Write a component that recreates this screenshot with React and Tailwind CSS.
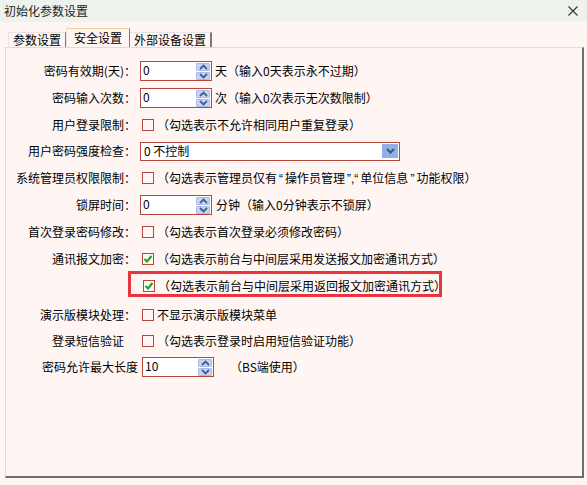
import React from 'react';

const FONT = { fontFamily: '"Noto Sans CJK SC", "Noto Sans", sans-serif' };

function Chevron({ up }) {
  return (
    <svg width="9" height="6" viewBox="0 0 9 6">
      <path d={up ? 'M1 5 L4.5 1.5 L8 5' : 'M1 1 L4.5 4.5 L8 1'} fill="none" stroke="#3f5f93" strokeWidth="1.8" />
    </svg>
  );
}

function Spinner({ value, w = 'w-[72px]' }) {
  return (
    <div className={`flex h-[20px] ${w} border border-[#b8473b] bg-white`}>
      <div className="flex-1 pl-[2px] text-[12px] leading-[16px]">{value}</div>
      <div className="flex w-[16px] flex-col gap-[1px] p-[1px]">
        <div className="flex flex-1 items-center justify-center rounded-[1px] border border-[#a9bbe6] bg-[#c6d4f5]"><Chevron up /></div>
        <div className="flex flex-1 items-center justify-center rounded-[1px] border border-[#a9bbe6] bg-[#c6d4f5]"><Chevron /></div>
      </div>
    </div>
  );
}

function Check({ checked }) {
  return (
    <div className="ml-[2px] flex h-[12px] w-[12px] shrink-0 items-center justify-center border border-[#b8473b]">
      {checked && (
        <svg width="10" height="10" viewBox="0 0 10 10">
          <path d="M1.5 5 L4 7.5 L8.5 2" fill="none" stroke="#20a020" strokeWidth="2" />
        </svg>
      )}
    </div>
  );
}

function Row({ h, label, colon = true, children }) {
  return (
    <div className={`flex items-center ${h}`}>
      <div className="w-[130px] shrink-0 text-right text-[12px] leading-none">
        {label}{colon ? '：' : <span className="inline-block w-[12px]" />}
      </div>
      <div className="ml-[4px] flex items-center">{children}</div>
    </div>
  );
}

const Note = ({ children, ml = 'ml-[3px]' }) => <span className={`${ml} whitespace-nowrap text-[12px] leading-none`}>{children}</span>;

// narrow quote marks, as in the original bitmap font
const Q = ({ children }) => <span className="px-[2px] font-['Liberation_Sans']">{children}</span>;

export default function App() {
  return (
    <div className="h-[485px] w-[587px] overflow-hidden bg-[#fff6f4] text-black" style={FONT}>
      {/* title bar */}
      <div className="flex h-[22px] items-center justify-between bg-[#eef2ec] pl-[4px] pr-[9px]">
        <span className="text-[12px] leading-none text-[#222]">初始化参数设置</span>
        <svg width="10" height="10" viewBox="0 0 10 10">
          <path d="M0.5 0.5 L9.5 9.5 M9.5 0.5 L0.5 9.5" stroke="#333" strokeWidth="1.1" />
        </svg>
      </div>

      {/* tabs */}
      <div className="mt-[6px] flex h-[19px] items-end pl-[8px]">
        <div className="flex h-[15px] w-[58px] items-center justify-center border-l border-t border-r border-l-[#e4e4e4] border-t-[#e4e4e4] border-r-[#7a7a7a] text-[12px] leading-none">参数设置</div>
        <div className="flex h-[19px] w-[64px] items-center justify-center border-l border-t border-r border-l-[#e4e4e4] border-t-[#f0cf98] border-r-[#7a7a7a] text-[12px] leading-none">安全设置</div>
        <div className="flex h-[15px] w-[82px] items-center justify-center border-t border-r-2 border-t-[#e4e4e4] border-r-[#7a7a7a] text-[12px] leading-none">外部设备设置</div>
      </div>

      {/* panel */}
      <div className="ml-[5px] h-[431px] w-[579px] border-l border-t border-r-2 border-b-2 border-l-[#dcdcdc] border-t-[#dcdcdc] border-r-[#6e6e6e] border-b-[#6e6e6e] pt-[10px]">
        <Row h="h-[26px]" label="密码有效期(天)">
          <Spinner value="0" />
          <Note>天（输入0天表示永不过期）</Note>
        </Row>
        <Row h="h-[27px]" label="密码输入次数">
          <Spinner value="0" />
          <Note>次（输入0次表示无次数限制）</Note>
        </Row>
        <Row h="h-[27px]" label="用户登录限制">
          <Check />
          <Note>（勾选表示不允许相同用户重复登录）</Note>
        </Row>
        <Row h="h-[26px]" label="用户密码强度检查">
          <div className="flex h-[19px] w-[260px] items-center justify-between border border-[#b8473b] bg-white">
            <span className="pl-[3px] text-[12px] leading-none">0 不控制</span>
            <div className="mr-[1px] flex h-[14px] w-[16px] items-center justify-center bg-[#8fb0e6]">
              <svg width="9" height="6" viewBox="0 0 9 6">
                <path d="M1 1 L4.5 4.5 L8 1" fill="none" stroke="#3a5585" strokeWidth="2" />
              </svg>
            </div>
          </div>
        </Row>
        <Row h="h-[28px]" label="系统管理员权限限制">
          <Check />
          <Note>（勾选表示管理员仅有<Q>“</Q>操作员管理<Q>”,“</Q>单位信息<Q>”</Q>功能权限）</Note>
        </Row>
        <Row h="h-[26px]" label="锁屏时间">
          <Spinner value="0" />
          <Note ml="ml-[4px]">分钟（输入0分钟表示不锁屏）</Note>
        </Row>
        <Row h="h-[28px]" label="首次登录密码修改">
          <Check />
          <Note>（勾选表示首次登录必须修改密码）</Note>
        </Row>
        <Row h="h-[25px]" label="通讯报文加密">
          <Check checked />
          <Note>（勾选表示前台与中间层采用发送报文加密通讯方式）</Note>
        </Row>
        <div className="flex h-[29px] items-start">
          <div className="w-[122px] shrink-0" />
          <div className="flex h-[26px] w-[314px] items-center border-[3px] border-[#e8343e] pl-[10px] pt-[4px]">
            <Check checked />
            <Note>（勾选表示前台与中间层采用返回报文加密通讯方式）</Note>
          </div>
        </div>
        <Row h="h-[29px]" label="演示版模块处理">
          <Check />
          <Note>不显示演示版模块菜单</Note>
        </Row>
        <Row h="h-[23px]" label="登录短信验证" colon={false}>
          <Check />
          <Note>（勾选表示登录时启用短信验证功能）</Note>
        </Row>
        <div className="flex h-[30px] items-center">
          <div className="w-[132px] shrink-0 text-right text-[12px] leading-none">密码允许最大长度</div>
          <div className="ml-[4px] flex items-center">
            <Spinner value="10" />
            <Note ml="ml-[16px]">（BS端使用）</Note>
          </div>
        </div>
      </div>
    </div>
  );
}
